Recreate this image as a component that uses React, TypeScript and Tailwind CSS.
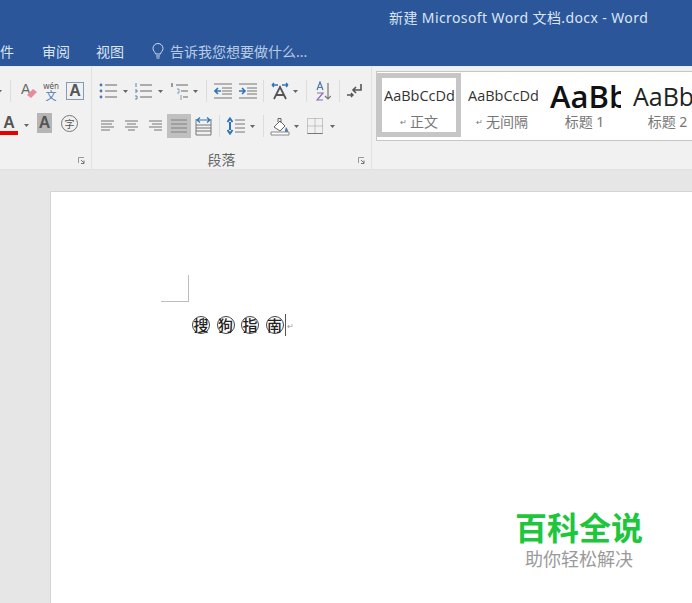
import type { ReactNode } from "react";

const cjk = { fontFamily: '"Noto Sans", "Noto Sans CJK SC", sans-serif' };

function Arrow({ className = "" }: { className?: string }) {
  return (
    <svg viewBox="0 0 5 3" className={`h-[3px] w-[5px] shrink-0 ${className}`}>
      <path d="M0 0h5L2.5 3z" fill="#666" />
    </svg>
  );
}

function Sep({ className = "" }: { className?: string }) {
  return <div className={`h-[22px] w-px shrink-0 bg-[#dcdcdc] ${className}`} />;
}

function Ico({ w, h = 20, className = "", children }: { w: number; h?: number; className?: string; children: ReactNode }) {
  return (
    <svg width={w} height={h} viewBox={`0 0 ${w} ${h}`} className={`shrink-0 ${className}`} fill="none">
      {children}
    </svg>
  );
}

function Lines({ rows }: { rows: [number, number, number][] }) {
  return (
    <>
      {rows.map(([x1, x2, y]) => (
        <path key={`${x1}-${y}`} d={`M${x1} ${y}H${x2}`} stroke="#8a8a8a" strokeWidth="1.2" />
      ))}
    </>
  );
}

function Bullets() {
  return (
    <Ico w={18}>
      <path d="M6 4h12M6 10h12M6 16h12" stroke="#666" />
      <circle cx="2" cy="4" r="1.4" fill="#4a78b0" />
      <circle cx="2" cy="10" r="1.4" fill="#4a78b0" />
      <circle cx="2" cy="16" r="1.4" fill="#4a78b0" />
    </Ico>
  );
}

function Numbered() {
  return (
    <Ico w={18}>
      <path d="M6 4h12M6 10h12M6 16h12" stroke="#666" />
      <path d="M2 2v4M1 9h2v2H1M1 15h2v3H1" stroke="#4a78b0" strokeWidth=".9" />
    </Ico>
  );
}

function Multi() {
  return (
    <Ico w={18}>
      <path d="M6 4h12M11 10h7M13 16h5" stroke="#666" />
      <path d="M2 2v4" stroke="#444" />
      <path d="M7 8h2v4H7" stroke="#7a9cc6" />
      <path d="M11 14v5" stroke="#999" />
    </Ico>
  );
}

function IndentIcon({ flip }: { flip?: boolean }) {
  return (
    <Ico w={18}>
      <path d="M0 3h18M8 7h10M8 10h10M8 13h10M0 17h18" stroke="#777" />
      {flip ? (
        <path d="M1 10h6M4 7l-3 3 3 3" stroke="#2f74b5" strokeWidth="1.6" />
      ) : (
        <path d="M0 10h6M3 7l3 3-3 3" stroke="#2f74b5" strokeWidth="1.6" />
      )}
    </Ico>
  );
}

export default function App() {
  return (
    <div className="flex h-screen w-full flex-col overflow-hidden bg-[#e6e6e6]" style={cjk}>
      {/* title + tabs */}
      <div className="h-[66px] shrink-0 overflow-hidden bg-[#2b579a] text-[#dbe5f3]">
        <div className="h-[36px] pl-[389px] pt-[8px] text-[14px] leading-[20px] tracking-[0.4px] whitespace-nowrap">
          新建 Microsoft Word 文档.docx - Word
        </div>
        <div className="flex h-[30px] items-center text-[14px] whitespace-nowrap">
          <span className="-ml-[14px] w-[56px]">文件</span>
          <span className="w-[54px]">审阅</span>
          <span className="w-[56px]">视图</span>
          <svg width="12" height="16" viewBox="0 0 12 16" fill="none" stroke="#cfdcee" className="shrink-0">
            <path d="M3.5 11C3 8.5 1 8 1 5.5a5 5 0 0 1 10 0C11 8 9 8.500 8.500 11zM4 13h4M4.500 15h3" />
          </svg>
          <span className="ml-[6px] text-[#b9cbe4]">告诉我您想要做什么...</span>
        </div>
      </div>
      <div className="h-px shrink-0 bg-[#e3eeee]" />

      {/* ribbon */}
      <div className="flex h-[103px] shrink-0 bg-[#f1f1f1] border-b border-[#e0e0e0]">
        {/* font group */}
        <div className="flex w-[92px] shrink-0 flex-col overflow-hidden border-r border-[#e0e0e0]">
          <div className="mt-[13px] flex h-[22px] items-center">
            <Arrow className="-ml-[3px]" />
            <Sep className="ml-[8px]" />
            <Ico w={16} className="ml-[10px]">
              <text x="0" y="13" fontSize="14" fill="#666" fontFamily="Liberation Sans">A</text>
              <path d="M6 14l6-6 4 3-6 6z" fill="#e98a9a" />
            </Ico>
            <div className="ml-[5px] flex w-[18px] shrink-0 flex-col items-center leading-none">
              <span className="text-[8px] leading-[9px] text-[#555]">wén</span>
              <span className="text-[11px] leading-[11px] text-[#3f76b5]">文</span>
            </div>
            <div className="ml-[6px] flex h-[18px] w-[18px] shrink-0 items-center justify-center border border-[#7f9db9] text-[16px] font-bold leading-none text-[#555]" style={{ fontFamily: '"Liberation Sans", sans-serif' }}>
              A
            </div>
          </div>
          <div className="mt-[11px] flex h-[26px] items-start">
            <div className="mt-[2px] flex h-[22px] w-[18px] shrink-0 flex-col items-center">
              <span className="h-[16px] text-[16px] font-bold leading-[16px] text-[#555]" style={{ fontFamily: '"Liberation Sans", sans-serif' }}>A</span>
              <div className="h-[4px] w-[18px] bg-[#e80000]" />
            </div>
            <Arrow className="ml-[6px] mt-[11px]" />
            <div className="ml-[8px] flex h-[20px] w-[15px] shrink-0 items-center justify-center bg-[#b5b5b5] text-[16px] font-bold text-[#555]" style={{ fontFamily: '"Liberation Sans", sans-serif' }}>
              A
            </div>
            <div className="ml-[9px] mt-[2px] flex h-[17px] w-[17px] shrink-0 items-center justify-center rounded-full border border-[#777] text-[10px] leading-none text-[#555]">
              字
            </div>
          </div>
          <div className="mt-auto mb-[4px] flex justify-end pr-[6px]">
            <Launcher />
          </div>
        </div>

        {/* paragraph group */}
        <div className="flex w-[280px] shrink-0 flex-col overflow-hidden border-r border-[#e0e0e0]">
          <div className="mt-[13px] flex h-[22px] items-center pl-[7px]">
            <Bullets />
            <Arrow className="ml-[6px]" />
            <div className="ml-[6px]"><Numbered /></div>
            <Arrow className="ml-[6px]" />
            <div className="ml-[7px]"><Multi /></div>
            <Arrow className="ml-[5px]" />
            <Sep className="ml-[8px]" />
            <div className="ml-[7px]"><IndentIcon flip /></div>
            <div className="ml-[7px]"><IndentIcon /></div>
            <Sep className="ml-[6px]" />
            <Ico w={18} className="ml-[7px]">
              <path d="M1 4h6M1 4l2-2M1 4l2 2M17 4h-6M17 4l-2-2M17 4l-2 2" stroke="#2f74b5" strokeWidth="1.4" />
              <path d="M3 18l6-12 6 12M5.500 14h7" stroke="#555" strokeWidth="1.8" />
            </Ico>
            <Arrow className="ml-[4px]" />
            <Sep className="ml-[8px]" />
            <Ico w={15} className="ml-[9px]">
              <path d="M1 9l3-8 3 8M2 6.500h4" stroke="#4a78b0" strokeWidth="1.2" />
              <path d="M1 12h6l-6 7h6" stroke="#8b6fb3" strokeWidth="1.2" />
              <path d="M12 2v16M9 15l3 3 3-3" stroke="#777" strokeWidth="1.2" />
            </Ico>
            <Sep className="ml-[8px]" />
            <Ico w={17} className="ml-[6px]">
              <path d="M15 3v6H7M10 6L7 9l3 3" stroke="#555" strokeWidth="1.6" />
              <path d="M1 14h6M5 12l2 2-2 2" stroke="#555" strokeWidth="1.4" />
            </Ico>
          </div>
          <div className="mt-[12px] flex h-[24px] items-center pl-[8px]">
            <Ico w={15}><Lines rows={[[1, 14, 5], [1, 12, 8], [1, 14, 11], [1, 10, 14]]} /></Ico>
            <Ico w={15} className="ml-[9px]"><Lines rows={[[1, 14, 5], [3, 12, 8], [1, 14, 11], [4, 11, 14]]} /></Ico>
            <Ico w={15} className="ml-[9px]"><Lines rows={[[1, 14, 5], [4, 14, 8], [1, 14, 11], [6, 14, 14]]} /></Ico>
            <div className="ml-[4px] flex h-[24px] w-[24px] shrink-0 items-center justify-center bg-[#c0c0c0]">
              <Ico w={16}><Lines rows={[[0, 16, 4], [0, 16, 8], [0, 16, 12], [0, 16, 16]]} /></Ico>
            </div>
            <Ico w={17} className="ml-[4px]">
              <path d="M1 3v16h15V3M1 9h15M1 12h15M1 15h15" stroke="#777" />
              <path d="M2 4h13M5 1.500L2 4l3 2.500M12 1.500L15 4l-3 2.500" stroke="#2f74b5" strokeWidth="1.2" />
            </Ico>
            <Sep className="ml-[7px]" />
            <Ico w={18} className="ml-[7px]">
              <path d="M3 6v8M0.500 6L3 2.500 5.500 6M0.500 14L3 17.500 5.500 14" stroke="#2f74b5" strokeWidth="2" />
              <path d="M8 4h10M8 8h10M8 12h10M8 16h10" stroke="#777" />
            </Ico>
            <Arrow className="ml-[5px]" />
            <Sep className="ml-[8px]" />
            <Ico w={20} className="ml-[6px]">
              <path d="M4 11l6-6 5 5-5 5z" stroke="#666" fill="#fff" />
              <path d="M8 6V2.500h3V7" stroke="#666" />
              <path d="M16 11c1.500 2 2 3 2 4a1.500 1.500 0 0 1-3 0c0-1 .5-2 1-4z" fill="#4a78b0" />
              <path d="M1 16h18v3H1z" stroke="#888" fill="#fff" />
            </Ico>
            <Arrow className="ml-[4px]" />
            <Ico w={16} className="ml-[8px]">
              <path d="M.500 2.500h15v15H.500zM8 2.500v15M.500 10h15" stroke="#999" strokeDasharray="1 1" />
              <path d="M.500 17.500h15" stroke="#777" />
            </Ico>
            <Arrow className="ml-[7px]" />
          </div>
          <div className="relative mt-[12px] flex h-[20px] items-center justify-center pr-[20px] text-[14px] leading-[20px] text-[#666]">
            段落
            <div className="absolute right-[6px] top-[7px]"><Launcher /></div>
          </div>
        </div>

        {/* styles gallery */}
        <div className="min-w-0 flex-1 pl-[4px] pt-[4px]">
          <div className="flex h-[70px] border border-r-0 border-[#c6c6c6] bg-white whitespace-nowrap">
            <StyleItem selected label="正文" mark sample="AaBbCcDd" sampleClass="text-[14.5px] text-[#333]" width="w-[84px]" />
            <StyleItem label="无间隔" mark sample="AaBbCcDd" sampleClass="text-[14.5px] text-[#333]" width="w-[82px]" />
            <StyleItem label="标题 1" sample="AaBbCc" sampleClass="text-[31px] text-[#111] font-semibold" width="w-[83px]" />
            <StyleItem label="标题 2" sample="AaBbCc" sampleClass="text-[25px] text-[#222]" width="w-[83px]" />
          </div>
        </div>
      </div>

      {/* ruler band + page */}
      <div className="flex min-h-0 flex-1 pl-[50px] pt-[21px]">
        <div className="relative flex-1 border-l border-t border-[#d4d4d4] bg-white">
          <div className="ml-[110px] mt-[83px] h-[27px] w-[28px] border-b border-r border-[#bdbdbd]" />
          <div className="ml-[141px] mt-[12px] flex h-[22px] items-center">
            {["搜", "狗", "指", "南"].map((ch) => (
              <span key={ch} className="mr-[6.5px] flex h-[18px] w-[18px] shrink-0 items-center justify-center rounded-full border border-[#444] text-[15px] font-medium leading-none text-[#222]">
                {ch}
              </span>
            ))}
            <div className="-ml-[5px] h-[22px] w-px bg-[#555]" />
            <span className="ml-[1px] mt-[2px] text-[8px] leading-none text-[#999]">↵</span>
          </div>

          {/* watermark */}
          <div className="absolute left-[463px] top-[316px] flex w-[130px] flex-col items-center whitespace-nowrap">
            <span className="text-[32px] font-bold leading-[40px] text-[#1ec63c]">百科全说</span>
            <span className="-mt-[1px] text-[18px] leading-[24px] text-[#9a9a9a]">助你轻松解决</span>
          </div>
        </div>
      </div>
    </div>
  );
}

function Launcher() {
  return (
    <svg width="7" height="8" viewBox="0 0 7 8" fill="none">
      <path d="M.500 6V.500H6" stroke="#999" />
      <path d="M3 3l3 3M6 3.500V6.500H3" stroke="#777" />
    </svg>
  );
}

function StyleItem({ label, sample, sampleClass, width, selected, mark }: { label: string; sample: string; sampleClass: string; width: string; selected?: boolean; mark?: boolean }) {
  return (
    <div className={`mt-px flex h-[64px] shrink-0 flex-col items-center overflow-hidden ${width} ${selected ? "border-[5px] border-[#c6c6c6]" : "border-[5px] border-transparent"}`}>
      <div className={`ml-[2px] h-[36px] w-[71px] self-start overflow-hidden leading-[36px] ${sampleClass}`} style={{ fontFamily: '"Open Sans", "Liberation Sans", sans-serif' }}>
        {sample}
      </div>
      <div className="flex h-[20px] items-center text-[14px] leading-[20px] text-[#777]">
        {mark ? <span className="mr-[3px] text-[8px] text-[#777]">↵</span> : null}
        {label}
      </div>
    </div>
  );
}
